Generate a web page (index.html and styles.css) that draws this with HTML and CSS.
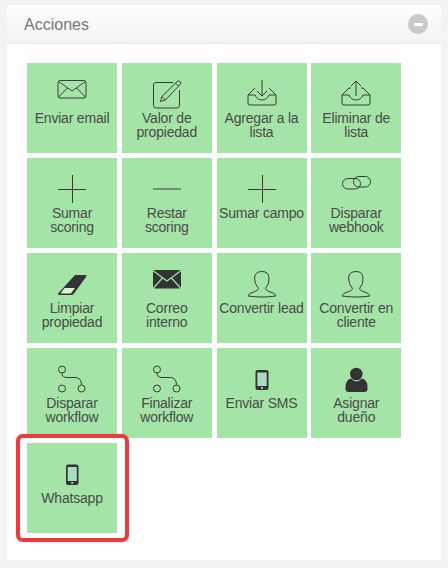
FILE: index.html
```html
<!DOCTYPE html>
<html lang="en">
<head>
    <meta charset="UTF-8">
    <meta name="viewport" content="width=device-width, initial-scale=1.0">
    <title>Acciones</title>
    <link rel="stylesheet" href="styles.css">
</head>
<body>
    <div class="panel">
        <header class="panel-header">
            <h2>Acciones</h2>
            <span class="collapse-button"></span>
        </header>

        <div class="actions">
            <div class="action">
                <svg class="icon" viewBox="0 0 30 30"><rect x="1" y="1.5" width="28" height="17.5" rx="2"/><path d="M1.5 2.5 L15 12 L28.5 2.5 M1.5 18 L10.5 9 M28.5 18 L19.5 9"/></svg>
                <span>Enviar email</span>
            </div>
            <div class="action">
                <svg class="icon" viewBox="0 0 30 30"><path d="M21 3.5 H4 Q1.5 3.5 1.5 6 V26.5 Q1.5 29 4 29 H25 Q27.5 29 27.5 26.5 V11"/><path d="M8.5 22.5 L10 17.5 L25.5 2 Q27 1.5 28.5 3 Q29 4.5 28.5 5 L13.5 21 Z M23.5 4 L26.5 7 M10 17.5 L13.5 21"/></svg>
                <span>Valor de propiedad</span>
            </div>
            <div class="action">
                <svg class="icon" viewBox="0 0 30 30"><path d="M8 9 L1 16 V24 Q1 26 3 26 H27 Q29 26 29 24 V16 L22 9 M1 16 H8 Q10 21 15 21 Q20 21 22 16 H29"/><path d="M15 1 V17 M10 12 L15 17 L20 12"/></svg>
                <span>Agregar a la lista</span>
            </div>
            <div class="action">
                <svg class="icon" viewBox="0 0 30 30"><path d="M10 9 H8 L1 16 V24 Q1 26 3 26 H27 Q29 26 29 24 V16 L22 9 H20 M1 16 H8 Q10 21 15 21 Q20 21 22 16 H29"/><path d="M15 17 V2 M10 7 L15 2 L20 7"/></svg>
                <span>Eliminar de lista</span>
            </div>

            <div class="action">
                <svg class="icon" viewBox="0 0 30 30"><path d="M1 15.5 H29 M15.5 1 V29"/></svg>
                <span>Sumar scoring</span>
            </div>
            <div class="action">
                <svg class="icon" viewBox="0 0 30 30"><path d="M1 15 H29"/></svg>
                <span>Restar scoring</span>
            </div>
            <div class="action">
                <svg class="icon" viewBox="0 0 30 30"><path d="M1 15.5 H29 M15.5 1 V29"/></svg>
                <span>Sumar campo</span>
            </div>
            <div class="action">
                <svg class="icon" viewBox="0 0 30 30"><rect x="1.5" y="4.5" width="18" height="10.5" rx="5.2"/><rect x="12.5" y="2.5" width="17" height="10.5" rx="5.2"/></svg>
                <span>Disparar webhook</span>
            </div>

            <div class="action">
                <svg class="icon" viewBox="0 0 30 30"><path class="solid" d="M18 6 H28 Q30.5 6 29 8 L17 24.5 Q16 26 14 26 H3 Q0 26 1.5 24 Z"/><path class="eraser-tip" d="M7.5 19 H18 L13.8 24.6 H3.4 Z"/></svg>
                <span>Limpiar propiedad</span>
            </div>
            <div class="action">
                <svg class="icon" viewBox="0 0 30 30"><rect class="solid" x="1" y="1" width="28" height="18.5" rx="2"/><path class="cut" d="M1.5 2 L15 12 L28.5 2 M1.5 19 L10.5 9 M28.5 19 L19.5 9"/></svg>
                <span>Correo interno</span>
            </div>
            <div class="action">
                <svg class="icon" viewBox="0 0 30 30"><path d="M11.5 19.5 Q11 21.5 8 22.5 Q1.5 24 1 27 Q8 28 15 28 Q22 28 29 27 Q28.5 24 22 22.5 Q19 21.5 18.5 19.5 Q22.5 15 22 9 Q21.5 2.5 15 2.5 Q8 2.5 7.5 9 Q7.5 15 11.5 19.5 Z"/></svg>
                <span>Convertir lead</span>
            </div>
            <div class="action">
                <svg class="icon" viewBox="0 0 30 30"><path d="M11.5 19.5 Q11 21.5 8 22.5 Q1.5 24 1 27 Q8 28 15 28 Q22 28 29 27 Q28.5 24 22 22.5 Q19 21.5 18.5 19.5 Q22.5 15 22 9 Q21.5 2.5 15 2.5 Q8 2.5 7.5 9 Q7.5 15 11.5 19.5 Z"/></svg>
                <span>Convertir en cliente</span>
            </div>

            <div class="action">
                <svg class="icon" viewBox="0 0 30 30"><circle cx="5" cy="5.5" r="3.5"/><circle cx="5" cy="24.5" r="3.5"/><circle cx="24.5" cy="24.5" r="3.5"/><path d="M5 9 Q5 13.5 10 13.5 H18 Q24.5 13.5 24.5 21"/></svg>
                <span>Disparar workflow</span>
            </div>
            <div class="action">
                <svg class="icon" viewBox="0 0 30 30"><circle cx="5" cy="5.5" r="3.5"/><circle cx="5" cy="24.5" r="3.5"/><circle cx="24.5" cy="24.5" r="3.5"/><path d="M5 9 Q5 13.5 10 13.5 H18 Q24.5 13.5 24.5 21"/></svg>
                <span>Finalizar workflow</span>
            </div>
            <div class="action">
                <svg class="icon" viewBox="0 0 30 30"><rect class="solid" x="8.5" y="6" width="13" height="20" rx="2"/><rect class="screen" x="10.3" y="8.5" width="9.4" height="13.5"/><rect class="screen" x="14" y="23" width="2" height="1.8"/></svg>
                <span>Enviar SMS</span>
            </div>
            <div class="action">
                <svg class="icon" viewBox="0 0 30 30"><circle class="solid" cx="15.3" cy="10" r="6.3"/><path class="solid" d="M10 14.5 Q13 17.5 15.3 17.5 Q18 17.5 21 14.5 Q26.5 16 26.5 23 V25 Q26.5 28 23.5 28 H7.5 Q4.5 28 4.5 25 V23 Q4.5 16 10 14.5 Z"/></svg>
                <span>Asignar dueño</span>
            </div>

            <div class="action highlighted">
                <svg class="icon" viewBox="0 0 30 30"><rect class="solid" x="9" y="5.5" width="12.5" height="20.5" rx="2"/><rect class="screen" x="10.7" y="8" width="9.1" height="14"/><rect class="screen" x="14.2" y="23" width="2" height="1.8"/></svg>
                <span>Whatsapp</span>
            </div>
        </div>
    </div>
</body>
</html>
```

FILE: styles.css
```css
* {
    margin: 0;
    padding: 0;
    box-sizing: border-box;
}

body {
    background-color: #f3f3f3;
    color: #4a4a4a;
    font-family: 'Liberation Sans', Arial, sans-serif;
    padding: 5px 7px 8px;
}

.panel {
    background: white;
    height: 555px;
}

.panel-header {
    display: flex;
    align-items: center;
    justify-content: space-between;
    height: 39px;
    padding: 0 13px 0 17px;
    background: linear-gradient(to bottom, #fefefe, #f2f2f2);
    border-bottom: 1px solid #eaeaea;
}

.panel-header h2 {
    padding-top: 1px;
    font-size: 16px;
    font-weight: normal;
    color: #777;
}

.collapse-button {
    display: flex;
    align-items: center;
    justify-content: center;
    width: 20px;
    height: 20px;
    border-radius: 50%;
    background: #c9c9c9;
}

.collapse-button::before {
    content: "";
    width: 9px;
    height: 3px;
    border-radius: 1px;
    background: white;
}

.actions {
    display: grid;
    grid-template-columns: repeat(4, 90px);
    grid-auto-rows: 90px;
    gap: 5px 4.75px;
    padding: 19px 20px;
}

.action {
    position: relative;
    display: flex;
    flex-direction: column;
    align-items: center;
    padding: 16px 2px 0;
    background: #a4e5a7;
    font-size: 14px;
    letter-spacing: -0.2px;
    line-height: 14px;
    text-align: center;
}

.icon {
    flex: none;
    width: 30px;
    height: 30px;
    margin-bottom: 2px;
    fill: none;
    stroke: #3a3a3a;
    stroke-width: 1;
}

.icon .solid {
    fill: #333;
    stroke: none;
}

.icon .screen {
    fill: #a9dcc0;
    stroke: none;
}

.icon .cut {
    stroke: #a4e5a7;
    stroke-width: 1.2;
}

.icon .eraser-tip {
    fill: #d8f3d8;
    stroke: none;
}

.highlighted::after {
    content: "";
    position: absolute;
    top: -9px;
    left: -11px;
    right: -12px;
    bottom: -9px;
    border: 4px solid #ee3a3e;
    border-radius: 7px;
    box-shadow: 0 0 1px #777;
}
```
